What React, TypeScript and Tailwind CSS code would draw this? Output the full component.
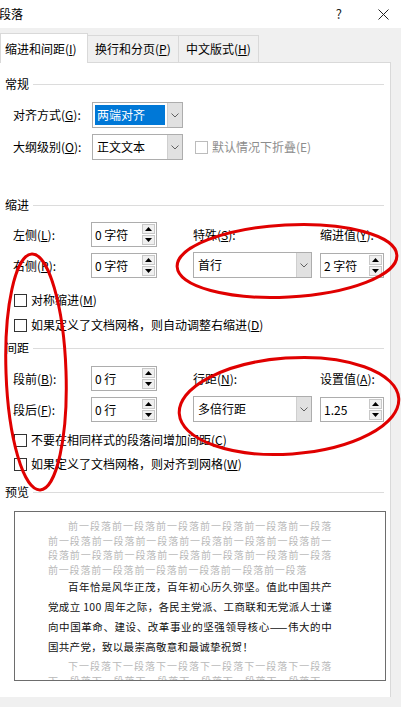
import React from 'react'

const font = { fontFamily: '"Noto Sans CJK SC", "Noto Sans", sans-serif' }

function Hot({ k }: { k: string }) {
  return (
    <>
      (<span className="underline">{k}</span>)
    </>
  )
}

function Header({ title }: { title: string }) {
  return (
    <div className="flex items-center gap-[4px] pr-[6px]">
      <span className="text-[12px] leading-[16px] text-black">{title}</span>
      <div className="flex-1 h-px bg-[#dcdcdc]" />
    </div>
  )
}

function Chevron() {
  return (
    <svg width="8" height="5" viewBox="0 0 8 5">
      <path d="M0.5 0.5 L4 4 L7.5 0.5" fill="none" stroke="#606060" strokeWidth="1" />
    </svg>
  )
}

function Select({ value, className, selected }: { value: string; className: string; selected?: boolean }) {
  return (
    <div className={`flex h-[26px] border border-[#adadad] bg-white ${className}`}>
      <div className="flex-1 flex items-center p-[2px]">
        <div
          className={`h-full w-full flex items-center pl-[2px] text-[12px] ${
            selected ? 'bg-[#0078d7] text-white' : 'text-black'
          }`}
        >
          {value}
        </div>
      </div>
      <div className="w-[15px] bg-[#e1e1e1] border-l border-[#cfcfcf] flex items-center justify-center">
        <Chevron />
      </div>
    </div>
  )
}

function Tri({ up }: { up?: boolean }) {
  return (
    <svg width="7" height="4" viewBox="0 0 7 4">
      <path d={up ? 'M0 4 L3.5 0 L7 4 Z' : 'M0 0 L3.5 4 L7 0 Z'} fill="#000" />
    </svg>
  )
}

function Spin({ value, className }: { value: string; className: string }) {
  return (
    <div className={`flex h-[25px] border border-[#adadad] bg-white ${className}`}>
      <div className="flex-1 flex items-center pl-[3px] text-[12px] text-black">{value}</div>
      <div className="w-[15px] flex flex-col gap-[1px] p-[1px]">
        <div className="flex-1 flex items-center justify-center border border-[#c8c8c8] bg-[#f0f0f0]">
          <Tri up />
        </div>
        <div className="flex-1 flex items-center justify-center border border-[#c8c8c8] bg-[#f0f0f0]">
          <Tri />
        </div>
      </div>
    </div>
  )
}

function Check({ children, disabled }: { children: React.ReactNode; disabled?: boolean }) {
  return (
    <div className="flex items-center gap-[4px]">
      <div className={`w-[13px] h-[13px] border bg-white ${disabled ? 'border-[#bcbcbc]' : 'border-[#333]'}`} />
      <span className={`text-[12px] leading-[16px] ${disabled ? 'text-[#8d8d8d]' : 'text-black'}`}>{children}</span>
    </div>
  )
}

const gray = 'text-[10px] tracking-[0.8px] text-[#b9b9b9] leading-[14.5px] whitespace-nowrap'
const dark = 'text-[10.5px] tracking-[0.3px] text-[#111] leading-[20px] whitespace-nowrap'
const just = '[text-align-last:justify]'

export default function App() {
  return (
    <div className="relative w-[401px] h-[707px] bg-[#f0f0f0] overflow-hidden" style={font}>
      {/* title bar */}
      <div className="h-[28px] bg-white flex items-center">
        <span className="ml-[-1px] text-[12px] text-black">段落</span>
        <div className="flex-1" />
        <span className="text-[13px] text-[#222] mr-[36px]">?</span>
        <svg width="11" height="11" viewBox="0 0 11 11" className="mr-[12px]">
          <path d="M0.5 0.5 L10.5 10.5 M10.5 0.5 L0.5 10.5" stroke="#222" strokeWidth="1" />
        </svg>
      </div>

      {/* tabs */}
      <div className="h-[34px] flex items-end">
        <div className="relative z-10 mb-[-1px] h-[30px] w-[88px] bg-white border-t border-l border-r border-[#d9d9d9] flex items-center pl-[4px] text-[12px] text-black">
          缩进和间距<Hot k="I" />
        </div>
        <div className="h-[27px] w-[91px] border-t border-r border-[#d9d9d9] flex items-center pl-[7px] text-[12px] text-black">
          换行和分页<Hot k="P" />
        </div>
        <div className="h-[27px] w-[80px] border-t border-r border-[#d9d9d9] flex items-center pl-[7px] text-[12px] text-black">
          中文版式<Hot k="H" />
        </div>
      </div>

      {/* panel */}
      <div className="w-[391px] h-[635px] bg-white border-t border-r border-[#d9d9d9] pl-[5px] pt-[13px]">
        <Header title="常规" />
        <div className="mt-[10px] flex items-center">
          <span className="w-[87px] pl-[8px] text-[12px] text-black">
            对齐方式<Hot k="G" />:
          </span>
          <Select value="两端对齐" className="w-[91px]" selected />
        </div>
        <div className="mt-[6px] flex items-center">
          <span className="w-[87px] pl-[8px] text-[12px] text-black">
            大纲级别<Hot k="O" />:
          </span>
          <Select value="正文文本" className="w-[91px]" />
          <div className="ml-[12px]">
            <Check disabled>默认情况下折叠(E)</Check>
          </div>
        </div>

        <div className="mt-[37px]">
          <Header title="缩进" />
        </div>
        <div className="mt-[9px] flex">
          <div className="w-[188px] flex flex-col gap-[6px]">
            <div className="flex items-center">
              <span className="w-[86px] pl-[8px] text-[12px] text-black">
                左侧<Hot k="L" />:
              </span>
              <Spin value="0 字符" className="w-[66px]" />
            </div>
            <div className="flex items-center">
              <span className="w-[86px] pl-[8px] text-[12px] text-black">
                右侧<Hot k="R" />:
              </span>
              <Spin value="0 字符" className="w-[66px]" />
            </div>
          </div>
          <div className="flex gap-[8px]">
            <div className="flex flex-col justify-between">
              <span className="text-[12px] text-black leading-[25px]">
                特殊<Hot k="S" />:
              </span>
              <Select value="首行" className="w-[119px]" />
            </div>
            <div className="flex flex-col justify-between">
              <span className="text-[12px] text-black leading-[25px]">
                缩进值<Hot k="Y" />:
              </span>
              <Spin value="2 字符" className="w-[64px]" />
            </div>
          </div>
        </div>
        <div className="mt-[14px] pl-[9px] flex flex-col gap-[9px]">
          <Check>
            对称缩进<Hot k="M" />
          </Check>
          <Check>
            如果定义了文档网格，则自动调整右缩进<Hot k="D" />
          </Check>
        </div>

        <div className="mt-[7px]">
          <Header title="间距" />
        </div>
        <div className="mt-[10px] flex">
          <div className="w-[188px] flex flex-col gap-[6px]">
            <div className="flex items-center">
              <span className="w-[86px] pl-[8px] text-[12px] text-black">
                段前<Hot k="B" />:
              </span>
              <Spin value="0 行" className="w-[66px]" />
            </div>
            <div className="flex items-center">
              <span className="w-[86px] pl-[8px] text-[12px] text-black">
                段后<Hot k="F" />:
              </span>
              <Spin value="0 行" className="w-[66px]" />
            </div>
          </div>
          <div className="flex gap-[8px]">
            <div className="flex flex-col justify-between">
              <span className="text-[12px] text-black leading-[25px]">
                行距<Hot k="N" />:
              </span>
              <Select value="多倍行距" className="w-[119px]" />
            </div>
            <div className="flex flex-col justify-between">
              <span className="text-[12px] text-black leading-[25px]">
                设置值<Hot k="A" />:
              </span>
              <Spin value="1.25" className="w-[64px]" />
            </div>
          </div>
        </div>
        <div className="mt-[10px] pl-[9px] flex flex-col gap-[8px]">
          <Check>
            不要在相同样式的段落间增加间距<Hot k="C" />
          </Check>
          <Check>
            如果定义了文档网格，则对齐到网格<Hot k="W" />
          </Check>
        </div>

        <div className="mt-[12px]">
          <Header title="预览" />
        </div>
        <div className="mt-[11px] ml-[9px] w-[372px] h-[170px] border border-[#6d6d6d] bg-white overflow-hidden pt-[7px] pl-[33px]">
          <div className="w-[284px]">
            <div className={`${gray} ${just} pl-[20px]`}>前一段落前一段落前一段落前一段落前一段落前一段落</div>
            <div className={`${gray} ${just}`}>前一段落前一段落前一段落前一段落前一段落前一段落前一</div>
            <div className={`${gray} ${just}`}>段落前一段落前一段落前一段落前一段落前一段落前一段落</div>
            <div className={gray}>前一段落前一段落前一段落前一段落前一段落前一段落</div>
            <div className={`${dark} ${just} pl-[20px]`}>百年恰是风华正茂，百年初心历久弥坚。值此中国共产</div>
            <div className={`${dark} ${just}`}>党成立 100 周年之际，各民主党派、工商联和无党派人士谨</div>
            <div className={`${dark} ${just}`}>向中国革命、建设、改革事业的坚强领导核心——伟大的中</div>
            <div className={dark}>国共产党，致以最崇高敬意和最诚挚祝贺！</div>
            <div className={`${gray} ${just} pl-[20px] mt-[2px]`}>下一段落下一段落下一段落下一段落下一段落下一段落</div>
            <div className={`${gray} ${just}`}>下一段落下一段落下一段落下一段落下一段落下一段落下一</div>
          </div>
        </div>
      </div>

      {/* red annotation ellipses */}
      <svg className="absolute inset-0 pointer-events-none" width="401" height="707" viewBox="0 0 401 707">
        <g fill="none" stroke="#e00000" strokeWidth="3">
          <ellipse cx="36" cy="372" rx="30" ry="118" transform="rotate(-2 36 372)" />
          <ellipse cx="287" cy="261" rx="110" ry="36" transform="rotate(-3 287 261)" />
          <ellipse cx="289" cy="406" rx="110" ry="48" transform="rotate(-4 289 406)" />
        </g>
      </svg>
    </div>
  )
}
